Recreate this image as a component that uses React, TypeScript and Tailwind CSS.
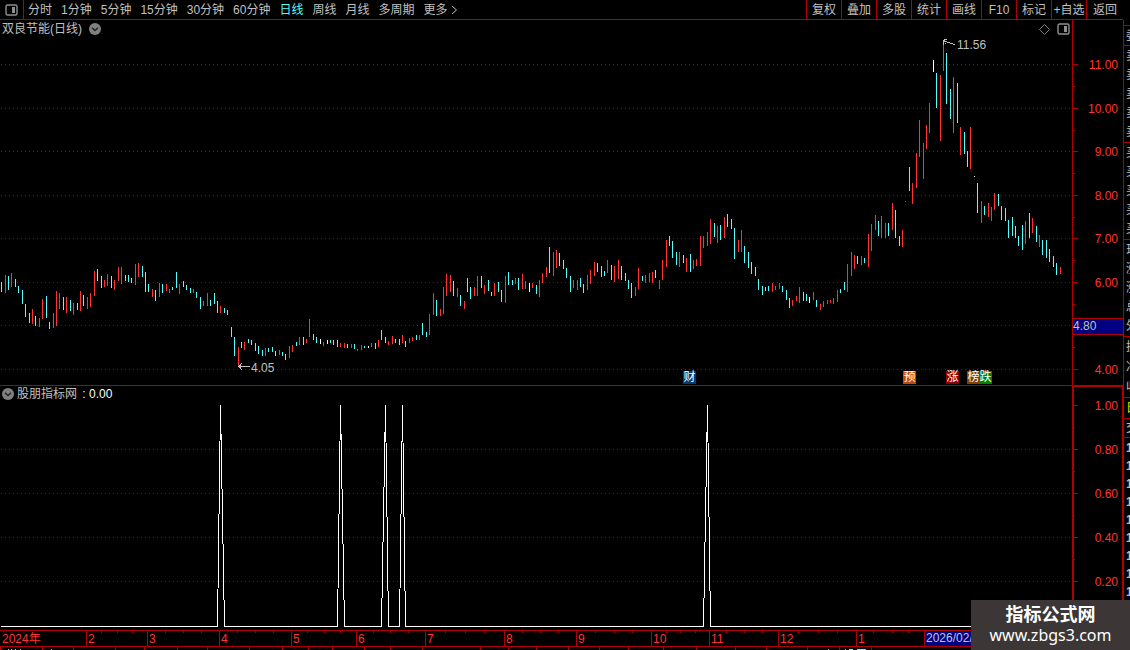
import { useState } from 'react';
import clsx from 'clsx';

type Candle = [x: number, high: number, low: number, kind: 'r' | 'c' | 'w'];

const KIND_COLOR = { r: '#ff3232', c: '#54fcfc', w: '#ffffff' };
const CHART_W = 1072;

const periods = ['分时', '1分钟', '5分钟', '15分钟', '30分钟', '60分钟', '日线', '周线', '月线', '多周期'];
const tools = ['复权', '叠加', '多股', '统计', '画线', 'F10', '标记', '+自选'];

// x, top, bottom, colour in chart units
const candles: Candle[] = [
  [1, 282, 292, 'c'], [5, 275, 293, 'r'], [8, 276, 290, 'c'], [11, 273, 287, 'r'], [15, 279, 287, 'c'],
  [18, 286, 293, 'c'], [22, 290, 304, 'c'], [25, 304, 317, 'c'], [29, 313, 323, 'c'], [32, 309, 324, 'r'],
  [35, 316, 326, 'c'], [39, 318, 327, 'r'], [42, 299, 319, 'r'], [46, 296, 318, 'c'], [49, 322, 329, 'c'],
  [53, 313, 328, 'r'], [56, 291, 326, 'r'], [59, 293, 309, 'r'], [63, 297, 310, 'c'], [66, 297, 313, 'r'],
  [70, 300, 311, 'c'], [73, 303, 315, 'r'], [77, 303, 310, 'c'], [80, 291, 311, 'r'], [83, 295, 306, 'c'],
  [87, 297, 309, 'r'], [90, 293, 307, 'r'], [94, 271, 296, 'r'], [97, 269, 281, 'c'], [101, 276, 288, 'c'],
  [104, 280, 287, 'r'], [107, 274, 286, 'r'], [111, 276, 288, 'c'], [114, 280, 290, 'r'], [118, 267, 281, 'r'],
  [121, 267, 284, 'r'], [125, 275, 281, 'c'], [128, 275, 282, 'c'], [131, 278, 283, 'c'], [135, 264, 285, 'r'],
  [138, 263, 277, 'r'], [142, 266, 277, 'c'], [145, 272, 292, 'c'], [148, 284, 292, 'c'], [152, 289, 297, 'r'],
  [155, 290, 301, 'c'], [159, 283, 297, 'r'], [162, 284, 293, 'c'], [166, 284, 291, 'r'], [169, 289, 293, 'r'],
  [172, 287, 290, 'c'], [176, 272, 288, 'c'], [179, 284, 294, 'r'], [183, 281, 287, 'c'], [186, 285, 290, 'c'],
  [190, 288, 293, 'c'], [193, 289, 293, 'r'], [196, 292, 298, 'c'], [200, 297, 309, 'c'], [203, 301, 306, 'r'],
  [207, 293, 306, 'r'], [210, 300, 306, 'c'], [214, 293, 304, 'c'], [217, 301, 313, 'c'], [220, 306, 313, 'r'],
  [224, 308, 313, 'c'], [227, 310, 315, 'c'], [231, 327, 337, 'c'], [234, 337, 356, 'c'], [238, 347, 366, 'r'],
  [241, 342, 348, 'c'], [244, 342, 350, 'r'], [248, 339, 343, 'c'], [251, 340, 345, 'c'], [255, 343, 351, 'c'],
  [258, 346, 354, 'c'], [262, 350, 356, 'c'], [265, 348, 356, 'r'], [268, 348, 352, 'c'], [272, 347, 352, 'c'],
  [275, 351, 356, 'c'], [279, 350, 355, 'r'], [282, 352, 356, 'c'], [285, 354, 360, 'c'], [289, 346, 358, 'r'],
  [292, 345, 352, 'r'], [296, 342, 346, 'c'], [299, 337, 345, 'r'], [303, 337, 345, 'c'], [306, 339, 343, 'r'],
  [309, 319, 337, 'r'], [313, 334, 340, 'c'], [316, 337, 343, 'c'], [320, 339, 344, 'w'], [323, 342, 346, 'r'],
  [327, 340, 344, 'w'], [330, 340, 343, 'c'], [333, 340, 345, 'c'], [337, 340, 347, 'c'], [340, 343, 347, 'r'],
  [344, 343, 348, 'r'], [347, 344, 348, 'c'], [351, 344, 348, 'r'], [354, 344, 349, 'c'], [357, 349, 351, 'r'],
  [361, 345, 350, 'r'], [364, 346, 348, 'c'], [368, 346, 348, 'w'], [371, 343, 347, 'r'], [375, 343, 349, 'c'],
  [378, 340, 347, 'r'], [381, 330, 340, 'c'], [385, 337, 343, 'c'], [388, 341, 345, 'r'], [392, 336, 344, 'r'],
  [395, 339, 343, 'c'], [399, 339, 345, 'c'], [402, 335, 343, 'r'], [405, 341, 347, 'c'], [409, 338, 343, 'r'],
  [412, 337, 341, 'r'], [416, 335, 340, 'c'], [419, 335, 340, 'r'], [422, 323, 335, 'c'], [426, 332, 337, 'c'],
  [429, 314, 335, 'r'], [433, 293, 315, 'r'], [436, 300, 316, 'c'], [440, 309, 316, 'r'], [443, 287, 314, 'r'],
  [446, 274, 296, 'r'], [450, 275, 292, 'r'], [453, 281, 296, 'c'], [457, 288, 297, 'r'], [460, 295, 306, 'c'],
  [464, 301, 309, 'r'], [467, 278, 292, 'c'], [470, 287, 299, 'c'], [474, 287, 296, 'r'], [477, 276, 296, 'r'],
  [481, 276, 288, 'c'], [484, 285, 294, 'r'], [488, 280, 291, 'c'], [491, 292, 296, 'c'], [494, 283, 296, 'r'],
  [498, 282, 292, 'c'], [501, 290, 302, 'c'], [505, 276, 303, 'r'], [508, 272, 285, 'c'], [512, 280, 285, 'c'],
  [515, 278, 284, 'r'], [518, 278, 290, 'c'], [522, 274, 289, 'r'], [525, 281, 289, 'r'], [529, 283, 292, 'w'],
  [532, 283, 288, 'r'], [536, 285, 294, 'c'], [539, 280, 297, 'r'], [542, 273, 283, 'r'], [546, 267, 277, 'r'],
  [549, 247, 273, 'c'], [553, 252, 276, 'r'], [556, 250, 268, 'r'], [559, 253, 266, 'c'], [563, 260, 269, 'c'],
  [566, 268, 278, 'c'], [570, 276, 292, 'c'], [573, 280, 288, 'r'], [577, 280, 290, 'r'], [580, 278, 287, 'c'],
  [583, 284, 293, 'c'], [587, 275, 290, 'r'], [590, 270, 284, 'r'], [594, 262, 276, 'r'], [597, 263, 272, 'c'],
  [601, 266, 277, 'c'], [604, 271, 276, 'c'], [607, 260, 273, 'r'], [611, 265, 280, 'c'], [614, 266, 282, 'r'],
  [618, 260, 279, 'r'], [621, 266, 280, 'c'], [625, 273, 281, 'c'], [628, 280, 289, 'c'], [631, 283, 298, 'c'],
  [635, 287, 296, 'r'], [638, 268, 289, 'r'], [642, 276, 281, 'c'], [645, 275, 283, 'r'], [649, 273, 282, 'r'],
  [652, 272, 283, 'r'], [655, 270, 278, 'c'], [659, 280, 289, 'r'], [662, 260, 280, 'r'], [666, 240, 267, 'r'],
  [669, 236, 246, 'c'], [672, 241, 258, 'c'], [676, 252, 265, 'c'], [679, 252, 267, 'r'], [683, 255, 263, 'c'],
  [686, 258, 272, 'r'], [690, 254, 272, 'c'], [693, 260, 269, 'r'], [696, 259, 266, 'r'], [700, 236, 266, 'r'],
  [703, 236, 248, 'r'], [707, 232, 246, 'r'], [710, 219, 244, 'r'], [714, 223, 237, 'c'], [717, 226, 243, 'r'],
  [720, 225, 240, 'c'], [724, 217, 238, 'r'], [727, 214, 227, 'c'], [731, 219, 229, 'c'], [734, 228, 259, 'c'],
  [738, 240, 252, 'r'], [741, 230, 252, 'r'], [744, 246, 263, 'c'], [748, 252, 268, 'c'], [751, 262, 274, 'c'],
  [755, 267, 276, 'c'], [758, 279, 290, 'c'], [762, 286, 295, 'c'], [765, 287, 291, 'c'], [768, 286, 291, 'c'],
  [772, 283, 292, 'r'], [775, 286, 290, 'r'], [779, 283, 289, 'r'], [782, 286, 292, 'c'], [786, 290, 300, 'c'],
  [789, 298, 308, 'c'], [792, 300, 306, 'r'], [796, 296, 301, 'r'], [799, 287, 303, 'r'], [803, 292, 301, 'c'],
  [806, 294, 301, 'c'], [809, 297, 303, 'w'], [813, 292, 300, 'r'], [816, 300, 307, 'c'], [820, 304, 310, 'r'],
  [823, 301, 307, 'r'], [827, 300, 304, 'r'], [830, 300, 303, 'r'], [833, 298, 304, 'r'], [837, 290, 302, 'r'],
  [840, 289, 293, 'c'], [844, 282, 290, 'c'], [847, 264, 292, 'r'], [851, 252, 276, 'r'], [854, 255, 269, 'r'],
  [857, 256, 264, 'c'], [861, 256, 265, 'r'], [864, 258, 263, 'c'], [868, 234, 267, 'r'], [871, 224, 251, 'r'],
  [875, 215, 230, 'r'], [878, 221, 236, 'c'], [881, 216, 238, 'r'], [885, 223, 238, 'r'], [888, 223, 236, 'c'],
  [892, 203, 230, 'r'], [895, 210, 238, 'c'], [899, 236, 246, 'c'], [902, 230, 247, 'r'], [905, 201, 202, 'r'],
  [909, 167, 191, 'c'], [912, 183, 204, 'r'], [916, 153, 188, 'r'], [919, 120, 157, 'r'], [923, 143, 179, 'r'],
  [926, 125, 149, 'r'], [929, 103, 133, 'r'], [933, 60, 72, 'w'], [936, 73, 108, 'c'], [940, 75, 141, 'r'],
  [943, 43, 71, 'r'], [946, 53, 104, 'c'], [950, 89, 119, 'c'], [953, 77, 133, 'r'], [957, 83, 123, 'c'],
  [960, 127, 155, 'r'], [964, 132, 154, 'c'], [967, 151, 167, 'c'], [970, 127, 169, 'r'], [974, 176, 177, 'w'],
  [977, 183, 213, 'c'], [981, 201, 223, 'r'], [984, 206, 215, 'c'], [988, 203, 217, 'r'], [991, 207, 221, 'r'],
  [994, 193, 210, 'r'], [998, 194, 206, 'c'], [1001, 206, 220, 'c'], [1005, 208, 221, 'c'], [1008, 220, 238, 'c'],
  [1012, 217, 236, 'c'], [1015, 226, 238, 'c'], [1018, 236, 246, 'c'], [1022, 225, 250, 'c'], [1025, 221, 244, 'r'],
  [1029, 213, 238, 'c'], [1032, 218, 233, 'r'], [1036, 226, 242, 'c'], [1039, 235, 247, 'r'], [1042, 240, 255, 'c'],
  [1046, 240, 258, 'c'], [1049, 249, 262, 'c'], [1053, 256, 267, 'c'], [1056, 263, 275, 'c'], [1060, 267, 274, 'r'],
];

const priceGrid = [64, 108, 151, 195, 238, 282, 325, 369];
const priceLabels: [number, string][] = [
  [64, '11.00'], [108, '10.00'], [151, '9.00'], [195, '8.00'], [238, '7.00'], [282, '6.00'], [369, '4.00'],
];
const priceMinor = [86, 130, 173, 217, 260, 304, 347];

const signalGrid = [449, 493, 537, 581];
const signalLabels: [number, string][] = [[405, '1.00'], [449, '0.80'], [493, '0.60'], [537, '0.40'], [581, '0.20']];
const signalMinor = [427, 471, 515, 559, 603];
const signals = [[217, 220, 224], [337, 340, 344], [381, 385, 388], [399, 402, 405], [703, 707, 710]];

const tags = [
  { x: 683, text: '财', color: 'bg-[#003c78]' },
  { x: 903, text: '预', color: 'bg-[#c04810]' },
  { x: 946, text: '涨', color: 'bg-[#8c0000]' },
  { x: 967, text: '榜', color: 'bg-[#804000]' },
  { x: 979, text: '跌', color: 'bg-[#008000]' },
];

const months: [number, string][] = [
  [86, '2'], [147, '3'], [219, '4'], [291, '5'], [356, '6'], [425, '7'], [504, '8'],
  [576, '9'], [651, '10'], [709, '11'], [778, '12'], [856, '1'],
];
const weekTicks = [
  101, 117, 132, 165, 183, 201, 237, 255, 273, 307, 324, 340, 373, 390, 408, 445, 465, 484, 522, 540, 558,
  595, 614, 632, 666, 680, 695, 726, 744, 762, 798, 818, 837, 873, 892, 908,
];
const tabTicks = [
  0, 42, 73, 115, 144, 177, 207, 249, 282, 308, 332, 364, 390, 422, 480, 508, 536, 568, 599, 628, 663, 696,
  735, 766, 807, 839, 871,
];

const quoteGroups = [
  { rows: ['委'], cls: 'h-5' },
  { rows: ['卖', '卖', '卖', '卖', '卖'], cls: 'h-[97px]' },
  { rows: ['买', '买', '买', '买', '买'], cls: 'h-[97px]' },
  { rows: ['现', '涨', '涨', '总', '外'], cls: 'h-[97px]' },
  { rows: ['换', '净', '收'], cls: 'h-[61px]' },
  { rows: ['日'], cls: 'h-[21px] text-[#e0e000]' },
  { rows: ['交'], cls: 'h-[19px]' },
];

const pct = (x: number) => `${(x / CHART_W) * 100}%`;

function GridLine({ y }: { y: number }) {
  return <line x1={1} x2={CHART_W} y1={y + 0.5} y2={y + 0.5} stroke="#a80000" strokeDasharray="1 3" />;
}

function PanelIcon() {
  return (
    <svg width="13" height="12" viewBox="0 0 13 12">
      <rect x="1" y="1" width="11" height="10" rx="1.5" fill="none" stroke="#909090" strokeWidth="1.4" />
      <rect x="7" y="3" width="3" height="6" fill="#909090" />
    </svg>
  );
}

function CollapseButton({ label }: { label: string }) {
  return (
    <button aria-label={label} className="shrink-0">
      <svg width="12" height="12" viewBox="0 0 12 12" className="block">
        <circle cx="6" cy="6" r="6" fill="#808080" />
        <path d="M3 4.8 L6 7.6 L9 4.8" fill="none" stroke="#202020" strokeWidth="1.3" />
      </svg>
    </button>
  );
}

function Toolbar() {
  const [active, setActive] = useState('日线');
  return (
    <header className="flex h-5 pr-[7px]">
      <div className="flex min-w-0 flex-1 items-stretch border-b border-[#b00000]">
        <button aria-label="侧栏" className="flex w-6 shrink-0 items-center justify-center border-r border-[#b00000]">
          <PanelIcon />
        </button>
        <nav className="flex items-center gap-[9px] pl-1 whitespace-nowrap">
          {periods.map(p => (
            <button key={p} onClick={() => setActive(p)} className={clsx(p === active && 'text-[#54fcfc]')}>
              {p}
            </button>
          ))}
          <button className="flex items-center gap-[3px]">
            更多
            <svg width="7" height="10" viewBox="0 0 7 10">
              <path d="M1 1 L5.5 5 L1 9" fill="none" stroke="#c0c0c0" />
            </svg>
          </button>
        </nav>
      </div>
      <div className="flex shrink-0 border-b border-[#b00000]">
        {tools.map(t => (
          <button key={t} className="w-[35px] border-l border-[#b00000] whitespace-nowrap">{t}</button>
        ))}
        <button className="w-[37px] border-l border-[#b00000]">返回</button>
      </div>
    </header>
  );
}

function PriceChart() {
  return (
    <section className="relative border-b border-[#b00000]">
      <svg
        className="block h-[365px] w-full"
        viewBox={`0 20 ${CHART_W} 365`}
        preserveAspectRatio="none"
        shapeRendering="crispEdges"
      >
        {priceGrid.map(y => <GridLine key={y} y={y} />)}
        {candles.map(([x, top, bottom, kind]) => (
          <rect key={x} x={x} y={top} width={1} height={bottom - top} fill={KIND_COLOR[kind]} />
        ))}
        <g stroke="#c0c0c0" fill="none">
          <path d="M944 39.5 H947 M943 40.5 H945 M943.5 40 V45 M944 41.5 H947 M947 42.5 H950 M950 43.5 H953 M953 44.5 H955 M945 43.5 H946" />
          <path d="M238 366.5 H250 M239.5 365 V368 M240.5 364 V369 M241.5 363 V364 M241.5 369 V370" />
        </g>
      </svg>
      <div className="absolute inset-x-0 top-0 flex items-center justify-between pr-0.5 pl-0.5">
        <h1 className="flex items-center gap-[7px]">
          双良节能(日线)
          <CollapseButton label="收起主图" />
        </h1>
        <div className="flex items-center gap-[7px]">
          <svg width="11" height="11" viewBox="0 0 11 11">
            <path d="M5.5 0.5 L10.5 5.5 L5.5 10.5 L0.5 5.5 Z" fill="none" stroke="#808080" />
          </svg>
          <PanelIcon />
        </div>
      </div>
      <span className="absolute top-4" style={{ left: pct(957) }}>11.56</span>
      <span className="absolute bottom-2" style={{ left: pct(251) }}>4.05</span>
      {tags.map(t => (
        <span
          key={t.text}
          className={clsx('absolute bottom-px h-[13px] w-[13px] text-center leading-[13px] text-white', t.color)}
          style={{ left: pct(t.x) }}
        >
          {t.text}
        </span>
      ))}
    </section>
  );
}

function SignalChart() {
  return (
    <section className="relative">
      <svg
        className="block h-[244px] w-full"
        viewBox={`0 386 ${CHART_W} 244`}
        preserveAspectRatio="none"
        shapeRendering="crispEdges"
      >
        {signalGrid.map(y => <GridLine key={y} y={y} />)}
        <path
          d={`M1 626.5 ${signals.map(([a, b, c]) => `H${a}.5 L${b}.5 405 L${c}.5 626.5`).join(' ')} H1061`}
          fill="none"
          stroke="#fff"
        />
      </svg>
      <div className="absolute top-0 left-0 flex items-center gap-[3px] pl-0.5 leading-4">
        <CollapseButton label="收起副图" />
        <span>股朋指标网 <span className="pl-0.5 text-white">: 0.00</span></span>
      </div>
    </section>
  );
}

function Axis() {
  return (
    <svg width="51" height="610" viewBox="1072 20 51 610" className="block shrink-0" shapeRendering="crispEdges">
      <g fill="#b00000">
        <rect x="1072" y="20" width="1" height="366" />
        <rect x="1072" y="385" width="51" height="2" />
        <rect x="1072" y="386" width="2" height="244" />
        <rect x="1122" y="386" width="1" height="244" />
        {[...priceLabels, ...signalLabels].map(([y]) => <rect key={y} x="1073" y={y} width="5" height="1" />)}
        {[...priceMinor, ...signalMinor].map(y => <rect key={y} x="1073" y={y} width="2" height="1" />)}
        <rect x="1072" y="318" width="51" height="17" />
      </g>
      <rect x="1073" y="319" width="50" height="15" fill="#000080" />
      <text x="1073" y="330" fill="#c0c0c0">4.80</text>
      <g fill="#ff3232" textAnchor="end">
        {[...priceLabels, ...signalLabels].map(([y, label]) => (
          <text key={y} x="1118" y={y + 5}>{label}</text>
        ))}
      </g>
    </svg>
  );
}

function DateAxis() {
  return (
    <footer className="relative h-5 text-[#ff3232]">
      <svg
        className="block h-5 w-full"
        viewBox="0 630 1123 20"
        preserveAspectRatio="none"
        shapeRendering="crispEdges"
      >
        <g fill="#b00000">
          <rect x="0" y="630" width="1123" height="1" />
          <rect x="0" y="646" width="1123" height="1" />
          {months.map(([x]) => <rect key={x} x={x} y="630" width="1" height="16" />)}
          {weekTicks.map(x => <rect key={x} x={x} y="631" width="1" height="2" />)}
          {tabTicks.map(x => <rect key={x} x={x} y="647" width="1" height="3" />)}
          <rect x="924" y="630" width="1" height="16" />
        </g>
        <rect x="925" y="631" width="60" height="15" fill="#000080" />
        <path d="M8 649.5 H9 M11 649.5 H12 M15 649.5 H16 M20 649.5 H21 M51 649.5 H52 M828 649.5 H829 M845 649.5 H846" stroke="#c0c0c0" />
        <path d="M849 649.5 H853 M857 649.5 H866" stroke="#54fcfc" />
      </svg>
      <span className="absolute top-px left-0.5 leading-4">2024年</span>
      {months.map(([x, m]) => (
        <span key={x} className="absolute top-px leading-4" style={{ left: `${((x + 2) / 1123) * 100}%` }}>{m}</span>
      ))}
      <span className="absolute top-0 leading-4 text-[#c0c0e0]" style={{ left: `${(926 / 1123) * 100}%` }}>2026/02/</span>
    </footer>
  );
}

function QuoteStrip() {
  return (
    <aside className="w-[7px] shrink-0 overflow-hidden border-l border-[#b00000] pt-[5px]">
      {quoteGroups.map((g, i) => (
        <div key={i} className={clsx('flex flex-col justify-around border-t border-[#b00000] pl-0.5', g.cls)}>
          {g.rows.map((r, j) => <span key={j} className="leading-4">{r}</span>)}
        </div>
      ))}
      <div className="border-t border-[#b00000] pt-px pl-0.5 font-bold">
        {Array.from({ length: 9 }, (_, i) => <p key={i}>1</p>)}
      </div>
    </aside>
  );
}

export default function App() {
  return (
    <div className="relative min-h-screen overflow-hidden bg-black font-['Liberation_Sans','Noto_Sans_CJK_SC',sans-serif] text-xs leading-[18px] text-[#c0c0c0]">
      <Toolbar />
      <div className="flex">
        <div className="min-w-0 flex-1">
          <div className="flex">
            <main className="min-w-0 flex-1">
              <PriceChart />
              <SignalChart />
            </main>
            <Axis />
          </div>
          <DateAxis />
        </div>
        <QuoteStrip />
      </div>
      <div className="absolute right-0 bottom-0 flex h-[50px] w-[159px] flex-col items-center justify-center bg-[#3c3636] text-white">
        <strong className="text-lg leading-5">指标公式网</strong>
        <a href="#" className="font-['Noto_Sans',sans-serif] text-base leading-5">www.zbgs3.com</a>
      </div>
    </div>
  );
}
